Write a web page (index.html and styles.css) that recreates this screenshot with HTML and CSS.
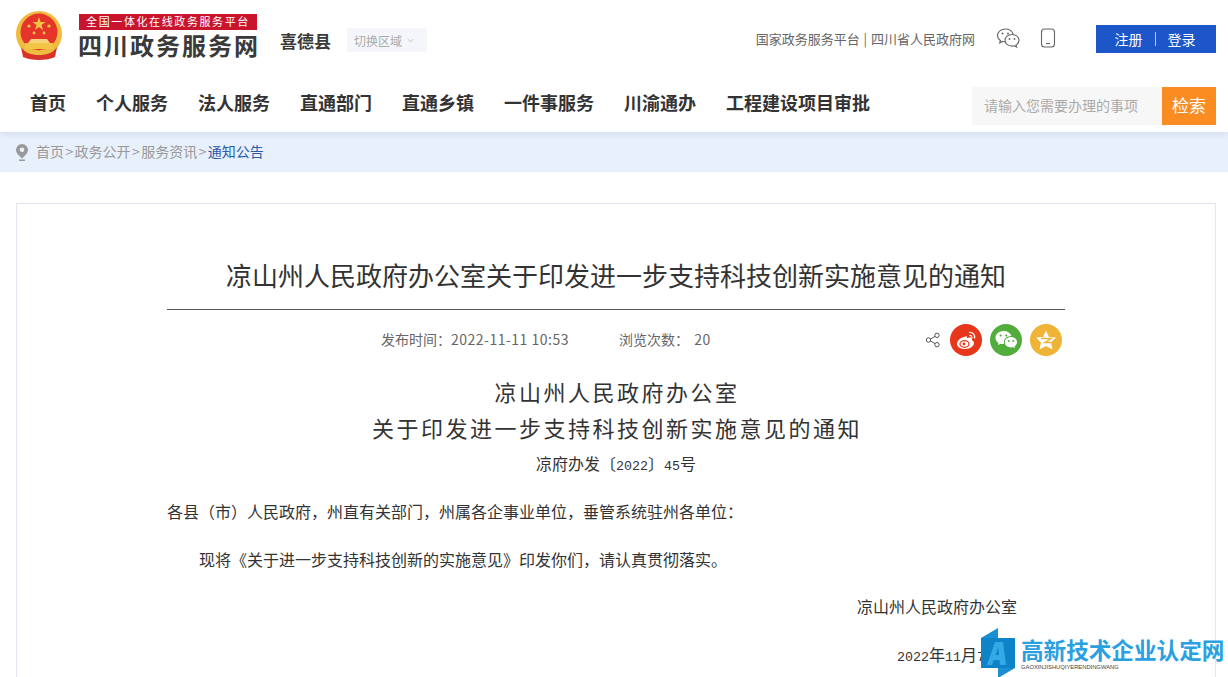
FILE: index.html
```html
<!DOCTYPE html>
<html lang="zh-CN">
<head>
    <meta charset="UTF-8">
    <meta name="viewport" content="width=device-width, initial-scale=1.0">
    <title>凉山州人民政府办公室关于印发进一步支持科技创新实施意见的通知</title>
    <link rel="stylesheet" href="styles.css">
</head>
<body>
    <header class="site-header">
        <div class="top-row">
            <div class="brand">
                <svg class="emblem" viewBox="0 0 48 50" width="48" height="50">
                    <circle cx="24" cy="23" r="23" fill="#eebc3f"/>
                    <circle cx="24" cy="21" r="18.5" fill="#e5352b"/>
                    <polygon points="24,6 25.6,11 30.5,11 26.5,14 28,19 24,16 20,19 21.5,14 17.5,11 22.4,11" fill="#f3c544"/>
                    <circle cx="14" cy="15" r="1.6" fill="#f3c544"/>
                    <circle cx="34" cy="15" r="1.6" fill="#f3c544"/>
                    <circle cx="19" cy="22" r="1.4" fill="#f3c544"/>
                    <circle cx="29" cy="22" r="1.4" fill="#f3c544"/>
                    <path d="M16 28h16l3 4H13z" fill="#f6d27a"/>
                    <rect x="10" y="32" width="28" height="6" fill="#f3c544"/>
                    <path d="M6 36c4 6 10 8 18 8s14-2 18-8l-2 10c-4 2-10 3-16 3S12 48 8 46z" fill="#d9322a"/>
                    <path d="M15 41c3-3 6-3 9-1 3-2 6-2 9 1-3 2-6 2-9 1-3 1-6 1-9-1z" fill="#eebc3f"/>
                </svg>
                <div class="brand-text">
                    <div class="brand-tag">全国一体化在线政务服务平台</div>
                    <div class="brand-name">四川政务服务网</div>
                </div>
            </div>
            <div class="region">喜德县</div>
            <div class="region-switch">切换区域
                <svg viewBox="0 0 10 6" width="7" height="5"><path d="M1 1l4 4 4-4" fill="none" stroke="#aaa" stroke-width="1"/></svg>
            </div>
            <div class="top-links">国家政务服务平台 | 四川省人民政府网</div>
            <svg class="top-icon wechat-line" viewBox="0 0 24 22" width="24" height="22">
                <path d="M9.5 2C5 2 1.5 4.900 1.500 8.500c0 2 1.100 3.800 2.900 5l-.7 2.300 2.700-1.400c.9.300 1.900.4 2.900.4" fill="none" stroke="#666" stroke-width="1.100"/>
                <path d="M17.400 7.400C16.200 4.300 13.100 2 9.500 2" fill="none" stroke="#666" stroke-width="1.100"/>
                <path d="M16 7.500c-3.900 0-7 2.600-7 5.800s3.100 5.800 7 5.800c.8 0 1.600-.1 2.300-.3l2.300 1.300-.6-2.100c1.800-1.100 3-2.800 3-4.700 0-3.200-3.100-5.800-7-5.800z" fill="none" stroke="#666" stroke-width="1.100"/>
                <circle cx="6.500" cy="6.500" r="1" fill="#666"/>
                <circle cx="12" cy="6.500" r="1" fill="#666"/>
                <circle cx="13.500" cy="12" r=".9" fill="#666"/>
                <circle cx="18.500" cy="12" r=".9" fill="#666"/>
            </svg>
            <svg class="top-icon phone-line" viewBox="0 0 16 20" width="16" height="20">
                <rect x="1.500" y="1" width="13" height="18" rx="3" fill="none" stroke="#666" stroke-width="1.100"/>
                <path d="M6 15.500h4" stroke="#666" stroke-width="1.100"/>
            </svg>
            <div class="auth"><span>注册</span><i></i><span>登录</span></div>
        </div>
        <div class="nav-row">
            <nav class="main-nav">
                <a>首页</a>
                <a>个人服务</a>
                <a>法人服务</a>
                <a>直通部门</a>
                <a>直通乡镇</a>
                <a>一件事服务</a>
                <a>川渝通办</a>
                <a>工程建设项目审批</a>
            </nav>
            <div class="search">
                <div class="search-input">请输入您需要办理的事项</div>
                <div class="search-btn">检索</div>
            </div>
        </div>
    </header>

    <div class="crumbs">
        <svg viewBox="0 0 12 17" width="12" height="17">
            <path d="M6 0a6 6 0 0 0-6 6c0 3.500 4 6.500 6 8.500 2-2 6-5 6-8.500a6 6 0 0 0-6-6z" fill="#999"/>
            <circle cx="6" cy="5.800" r="2.300" fill="#e8f0fb"/>
            <rect x="3" y="15.500" width="6" height="1.500" fill="#999"/>
        </svg>
        <span class="crumb-text">首页<i>&gt;</i>政务公开<i>&gt;</i>服务资讯<i>&gt;</i><b>通知公告</b></span>
    </div>

    <main class="card">
        <h1 class="title">凉山州人民政府办公室关于印发进一步支持科技创新实施意见的通知</h1>
        <div class="meta">
            <span class="meta-date">发布时间：<span class="meta-num">2022-11-11 10:53</span></span>
            <span class="meta-views">浏览次数： <span class="meta-num">20</span></span>
            <div class="share">
                <svg class="share-line" viewBox="0 0 16 16" width="16" height="16">
                    <circle cx="3.500" cy="8" r="2.200" fill="none" stroke="#555"/>
                    <circle cx="12" cy="3.300" r="2.200" fill="none" stroke="#555"/>
                    <circle cx="12" cy="12.700" r="2.200" fill="none" stroke="#555"/>
                    <path d="M5.500 7l4.600-2.600M5.500 9l4.600 2.600" stroke="#555"/>
                </svg>
                <span class="share-btn weibo">
                    <svg viewBox="0 0 24 24" width="24" height="24">
                        <path d="M10 9c-4 1-7 4-7 7 0 3 4 5 8 5 5 0 9-3 9-6 0-2-2-2.500-2-3 .5-2-1-3-4-2-1 .4-1 0-1-1s-1-1-3 0z" fill="#fff"/>
                        <ellipse cx="10.500" cy="16" rx="4.500" ry="3.300" fill="none" stroke="#e8361a" stroke-width="1.300"/>
                        <circle cx="10" cy="16" r="1.400" fill="#e8361a"/>
                        <path d="M15 4.500c3.500-.6 6.500 2.400 5.500 6M15.500 7.500c1.600-.3 2.800 1 2.400 2.700" fill="none" stroke="#fff" stroke-width="1.300"/>
                    </svg>
                </span>
                <span class="share-btn wechat">
                    <svg viewBox="0 0 24 24" width="24" height="24">
                        <path d="M9.500 3C5 3 1.500 6 1.500 9.700c0 2.100 1.200 4 3 5.200L4 17l2.600-1.300c.9.200 1.800.4 2.900.4h.6c-.2-.6-.3-1.200-.3-1.800 0-3.400 3.200-6.200 7.200-6.200h.4C16.600 5.100 13.400 3 9.500 3z" fill="#fff"/>
                        <path d="M17 9c-3.500 0-6.300 2.300-6.300 5.200s2.800 5.200 6.300 5.200c.7 0 1.400-.1 2-.3l2 1.100-.5-1.800c1.500-1 2.500-2.500 2.500-4.200C23.300 11.300 20.500 9 17 9z" fill="#fff"/>
                        <circle cx="6.700" cy="7.500" r="1.100" fill="#53ad3c"/>
                        <circle cx="12.300" cy="7.500" r="1.100" fill="#53ad3c"/>
                        <circle cx="14.800" cy="13" r=".9" fill="#53ad3c"/>
                        <circle cx="19.200" cy="13" r=".9" fill="#53ad3c"/>
                    </svg>
                </span>
                <span class="share-btn qzone">
                    <svg viewBox="0 0 24 24" width="24" height="24">
                        <polygon points="12,2.500 15,9 22,9.500 17,14.500 18.500,21.500 12,18 5.500,21.500 7,14.500 2,9.500 9,9" fill="#fff"/>
                        <path d="M7 10.500h10l-6 4h6" fill="none" stroke="#efb335" stroke-width="1.500"/>
                    </svg>
                </span>
            </div>
        </div>
        <article class="doc">
            <h2 class="doc-title">凉山州人民政府办公室<br>关于印发进一步支持科技创新实施意见的通知</h2>
            <p class="doc-no">凉府办发〔<span class="num">2022</span>〕<span class="num">45</span>号</p>
            <p class="doc-to">各县（市）人民政府，州直有关部门，州属各企事业单位，垂管系统驻州各单位：</p>
            <p class="doc-body">现将《关于进一步支持科技创新的实施意见》印发你们，请认真贯彻落实。</p>
            <p class="doc-sign">凉山州人民政府办公室</p>
            <p class="doc-date"><span class="num">2022</span>年<span class="num">11</span>月<span class="num">7</span>日</p>
        </article>
    </main>

    <div class="watermark">
        <svg viewBox="0 0 36 52" width="36" height="52">
            <polygon points="0,11 17,1 17,11" fill="#1b8fd2"/>
            <polygon points="17,41 34,41 17,51" fill="#1b8fd2"/>
            <rect y="11" width="34" height="30" fill="#0f83c8"/>
            <path d="M6 38L14 15h8l3 23h-6l-.5-5h-6L11 38zM14.500 28h3.500l-.7-8z" fill="#35a9e6"/>
        </svg>
        <div class="wm-text">
            <div class="wm-name">高新技术企业认定网</div>
            <div class="wm-sub">GAOXINJISHUQIYERENDINGWANG</div>
        </div>
    </div>
</body>
</html>
```

FILE: styles.css
```css
html, body {
    margin: 0;
    padding: 0;
}
body {
    position: relative;
    height: 677px;
    overflow: hidden;
    background-color: #fff;
    color: #333;
    font-family: "Noto Sans CJK SC", "Noto Sans", sans-serif;
}
.site-header {
    position: relative;
    height: 132px;
    background-color: #fff;
    box-shadow: 0 2px 6px rgba(40,70,130,0.12);
    padding: 0 12px 0 16px;
}
.top-row {
    display: flex;
    align-items: center;
    height: 76px;
}
.brand {
    display: flex;
    align-items: center;
    gap: 15px;
    margin: -2px 0 0 -1px;
}
.emblem {
    margin: -3px 0 -1px;
}
.brand-text {
    width: 180px;
}
.brand-tag {
    width: 178px;
    margin-left: 1px;
    background-color: #c8152d;
    color: #fff;
    font-size: 11px;
    line-height: 14px;
    height: 16px;
    letter-spacing: 1.600px;
    text-align: center;
    white-space: nowrap;
}
.brand-name {
    font-size: 24px;
    font-weight: 700;
    line-height: 30px;
    letter-spacing: 2px;
    color: #3a3a3a;
    white-space: nowrap;
}
.region {
    margin-left: 22px;
    font-size: 17px;
    font-weight: 700;
    color: #3a3a3a;
    margin-top: 5px;
}
.region-switch {
    display: flex;
    align-items: center;
    gap: 5px;
    margin: 4px 0 0 16px;
    width: 80px;
    height: 24px;
    box-sizing: border-box;
    padding-left: 7px;
    background-color: #f4f6fa;
    border-radius: 2px;
    font-size: 12px;
    color: #aaa;
}
.top-links {
    margin-left: auto;
    font-size: 13px;
    word-spacing: 1px;
    color: #666;
    white-space: nowrap;
}
.top-icon {
    margin-left: 21px;
}
.wechat-line {
    margin-right: -1px;
}
.auth {
    display: flex;
    align-items: center;
    justify-content: center;
    gap: 12px;
    width: 120px;
    height: 28px;
    box-sizing: border-box;
    padding-right: 2px;
    margin: 2px 0 0 40px;
    background-color: #1c56c9;
    color: #fff;
    font-size: 14px;
}
.auth i {
    width: 1px;
    height: 14px;
    background-color: #b9cdf2;
}
.nav-row {
    display: flex;
    align-items: center;
    justify-content: space-between;
    height: 38px;
    margin-top: 11px;
    padding-left: 14px;
}
.main-nav {
    display: flex;
    gap: 30px;
    margin-bottom: 8px;
}
.main-nav a {
    font-size: 18px;
    font-weight: 700;
    color: #333;
    white-space: nowrap;
}
.search {
    display: flex;
    height: 38px;
}
.search-input {
    width: 190px;
    box-sizing: border-box;
    padding-left: 12px;
    background-color: #f7f7f7;
    color: #aaa;
    font-size: 14px;
    line-height: 36px;
}
.search-btn {
    width: 54px;
    background-color: #fa8c22;
    color: #fff;
    font-size: 17px;
    line-height: 36px;
    text-align: center;
}
.crumbs {
    display: flex;
    align-items: center;
    gap: 8px;
    height: 40px;
    padding-left: 16px;
    background-color: #e8f0fb;
    color: #999;
    font-size: 14px;
}
.crumb-text {
    padding-bottom: 2px;
}
.crumb-text i {
    display: inline-block;
    width: 10.600px;
    font-style: normal;
    text-align: center;
}
.crumbs b {
    font-weight: 400;
    color: #2a5caa;
}
.card {
    margin: 31px 12px 0 16px;
    padding: 0 150px;
    height: 600px;
    border: 1px solid #e3e6f0;
}
.title {
    margin: 0;
    padding-top: 52px;
    height: 53px;
    border-bottom: 1px solid #555;
    font-size: 26px;
    font-weight: 400;
    line-height: 38px;
    text-align: center;
    color: #333;
    white-space: nowrap;
}
.meta {
    display: flex;
    align-items: center;
    height: 60px;
    font-size: 14px;
    color: #666;
}
.meta-date {
    margin: 0 0 2px 214px;
}
.meta-views {
    margin: 0 0 2px 50px;
    word-spacing: 2px;
}
.meta-num {
    letter-spacing: 0.500px;
}
.share {
    display: flex;
    align-items: center;
    gap: 8px;
    margin-left: auto;
    margin-right: 3px;
}
.share-line {
    margin-right: 1px;
}
.share-btn {
    display: flex;
    align-items: center;
    justify-content: center;
    width: 32px;
    height: 32px;
    border-radius: 50%;
}
.share-btn svg {
    display: block;
}
.weibo {
    background-color: #e8361a;
}
.wechat {
    background-color: #53ad3c;
}
.qzone {
    background-color: #efb335;
}
.doc {
    color: #333;
    font-size: 16px;
}
.doc p {
    margin: 0;
    white-space: nowrap;
}
.doc-title {
    margin: 3px 0 0;
    padding-left: 2px;
    font-size: 22px;
    font-weight: 400;
    line-height: 36px;
    letter-spacing: 2.500px;
    text-align: center;
}
.doc .doc-no {
    margin-top: 1px;
    line-height: 34px;
    text-align: center;
}
.num {
    font-family: "Liberation Mono", monospace;
    font-size: 13.330px;
}
.doc .doc-to {
    margin-top: 10px;
    line-height: 34px;
}
.doc .doc-body {
    margin-top: 14px;
    line-height: 34px;
    text-indent: 32px;
}
.doc .doc-sign {
    margin-top: 13px;
    line-height: 34px;
    padding-left: 690px;
}
.doc .doc-date {
    margin-top: 14px;
    line-height: 34px;
    padding-left: 730px;
}
.watermark {
    position: absolute;
    left: 981px;
    top: 627px;
    display: flex;
    gap: 4px;
}
.wm-text {
    padding-top: 10px;
}
.wm-name {
    font-size: 22.600px;
    font-weight: 700;
    line-height: 26px;
    color: #2aa0e0;
    white-space: nowrap;
}
.wm-sub {
    font-family: "Liberation Sans", sans-serif;
    font-size: 5.800px;
    line-height: 8px;
    color: #444;
    white-space: nowrap;
}
```
